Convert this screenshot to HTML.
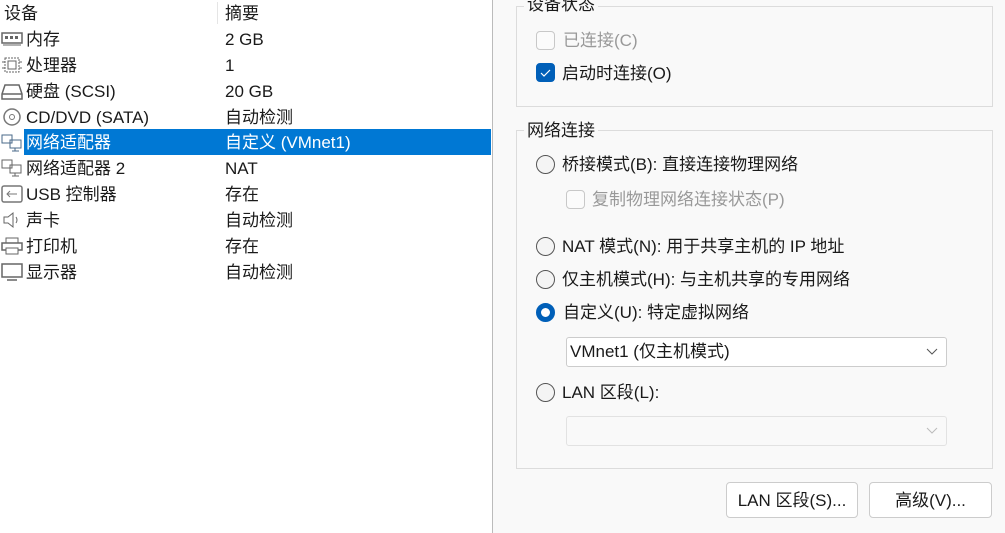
<!DOCTYPE html><html><head><meta charset="utf-8"><style>
*{margin:0;padding:0;box-sizing:border-box}
body{width:1005px;height:533px;overflow:hidden;background:#f9f9f9;font-family:"Liberation Sans","Noto Sans CJK SC",sans-serif;font-size:17px;color:#1a1a1a;position:relative}
.l{position:absolute;left:0;top:0;width:493px;height:533px;background:#fff;border-right:1px solid #bbb}
.r{position:absolute;height:26px;line-height:28px;left:0;width:491px}
.r .a{position:absolute;left:26px}.r .b{position:absolute;left:225px}
.sel{background:#0078d4;color:#fff;left:24px;width:467px}
.sel .a{left:2px}.sel .b{left:201px}
.ic{position:absolute;left:1px;top:4px;width:22px;height:18px}
.g{position:absolute;border:1px solid #dcdcdc;left:516px;width:477px}
.gt{position:absolute;background:#f9f9f9;padding:0 3px;left:7px;top:-13px;line-height:22px}
.t{position:absolute;line-height:24px;white-space:nowrap}
.cb{position:absolute;width:19px;height:19px;border:1px solid #c8c8c8;border-radius:4px;background:#fbfbfb}
.rd{position:absolute;width:19px;height:19px;border:1px solid #555;border-radius:50%;background:#f4f4f4}
.dd{position:absolute;left:566px;width:381px;height:30px;border:1px solid #ccc;border-radius:3px;background:#fff}
.btn{position:absolute;top:482px;height:36px;border:1px solid #ccc;border-radius:4px;background:#fff;text-align:center;line-height:36px}
.gray{color:#999}
</style></head><body>
<div class="l">
<div class="r" style="top:0"><span style="position:absolute;left:4px">设备</span><span style="position:absolute;left:217px;top:2px;height:22px;border-left:1px solid #e5e5e5"></span><span class="b">摘要</span></div>
<div class="r" style="top:26px"><svg class="ic" viewBox="0 0 22 18"><rect x="1" y="3" width="20" height="10" fill="none" stroke="#666" stroke-width="1.5"/><rect x="4" y="6" width="3" height="3" fill="#666"/><rect x="9" y="6" width="3" height="3" fill="#666"/><rect x="14" y="6" width="3" height="3" fill="#666"/><path d="M2 15h18" stroke="#666"/></svg><span class="a">内存</span><span class="b">2 GB</span></div>
<div class="r" style="top:52px"><svg class="ic" viewBox="0 0 22 18"><rect x="4" y="2" width="14" height="14" fill="none" stroke="#666" stroke-dasharray="2 1"/><rect x="7" y="5" width="8" height="8" fill="none" stroke="#666"/><path d="M1 6h3M1 12h3M18 6h3M18 12h3" stroke="#666"/></svg><span class="a">处理器</span><span class="b">1</span></div>
<div class="r" style="top:78px"><svg class="ic" viewBox="0 0 22 18"><path d="M4 3h14l3 9v5H1v-5z M1 12h20" fill="none" stroke="#666" stroke-width="1.5"/></svg><span class="a">硬盘 (SCSI)</span><span class="b">20 GB</span></div>
<div class="r" style="top:104px"><svg class="ic" viewBox="0 0 22 18"><circle cx="11" cy="9" r="8" fill="none" stroke="#777" stroke-width="1.5"/><circle cx="11" cy="9" r="2.5" fill="none" stroke="#777"/></svg><span class="a">CD/DVD (SATA)</span><span class="b">自动检测</span></div>
<div class="r" style="top:130px;left:0;width:24px"><svg class="ic" viewBox="0 0 22 18"><rect x="1" y="1" width="10" height="8" fill="none" stroke="#4a6a8a"/><rect x="9" y="6" width="11" height="8" fill="none" stroke="#4a6a8a"/><path d="M14 14v3M11 17h7" stroke="#4a6a8a"/></svg></div>
<div class="r sel" style="top:129px"><span class="a">网络适配器</span><span class="b">自定义 (VMnet1)</span></div>
<div class="r" style="top:155px"><svg class="ic" viewBox="0 0 22 18"><rect x="1" y="1" width="10" height="8" fill="none" stroke="#666"/><rect x="9" y="6" width="11" height="8" fill="none" stroke="#666"/><path d="M14 14v3M11 17h7" stroke="#666"/></svg><span class="a">网络适配器 2</span><span class="b">NAT</span></div>
<div class="r" style="top:181px"><svg class="ic" viewBox="0 0 22 18"><rect x="1" y="1" width="20" height="16" rx="2" fill="none" stroke="#777" stroke-width="1.5"/><path d="M6 9h10M9 6l-3 3 3 3" fill="none" stroke="#777"/></svg><span class="a">USB 控制器</span><span class="b">存在</span></div>
<div class="r" style="top:207px"><svg class="ic" viewBox="0 0 22 18"><path d="M3 6h4l5-4v14l-5-4H3z" fill="none" stroke="#666"/><path d="M15 6q2 3 0 6" fill="none" stroke="#666"/></svg><span class="a">声卡</span><span class="b">自动检测</span></div>
<div class="r" style="top:233px"><svg class="ic" viewBox="0 0 22 18"><rect x="5" y="1" width="12" height="5" fill="none" stroke="#666"/><rect x="1" y="6" width="20" height="7" fill="none" stroke="#666" stroke-width="1.5"/><rect x="5" y="11" width="12" height="6" fill="#fff" stroke="#666"/></svg><span class="a">打印机</span><span class="b">存在</span></div>
<div class="r" style="top:259px"><svg class="ic" viewBox="0 0 22 18"><rect x="1" y="1" width="20" height="13" fill="none" stroke="#666" stroke-width="1.5"/><path d="M6 17h10" stroke="#666" stroke-width="1.5"/></svg><span class="a">显示器</span><span class="b">自动检测</span></div>
</div>
<div class="g" style="top:6px;height:101px"><span class="gt">设备状态</span></div>
<div class="cb" style="left:536px;top:31px"></div><span class="t gray" style="left:563px;top:29px">已连接(C)</span>
<div class="cb" style="left:536px;top:63px;background:#005fb8;border-color:#005fb8"><svg width="17" height="17" viewBox="0 0 17 17"><path d="M4 9l3 3 6-6" fill="none" stroke="#fff" stroke-width="1.2"/></svg></div><span class="t" style="left:562px;top:62px">启动时连接(O)</span>
<div class="g" style="top:130px;height:339px"><span class="gt" style="top:-11px">网络连接</span></div>
<div class="rd" style="left:536px;top:155px"></div><span class="t" style="left:562px;top:153px">桥接模式(B): 直接连接物理网络</span>
<div class="cb" style="left:566px;top:190px"></div><span class="t gray" style="left:592px;top:188px">复制物理网络连接状态(P)</span>
<div class="rd" style="left:536px;top:237px"></div><span class="t" style="left:562px;top:235px">NAT 模式(N): 用于共享主机的 IP 地址</span>
<div class="rd" style="left:536px;top:270px"></div><span class="t" style="left:562px;top:268px">仅主机模式(H): 与主机共享的专用网络</span>
<div class="rd" style="left:536px;top:303px;border:5px solid #005fb8;background:#fff"></div><span class="t" style="left:563px;top:301px">自定义(U): 特定虚拟网络</span>
<div class="dd" style="top:337px"><span class="t" style="left:3px;top:2px">VMnet1 (仅主机模式)</span><svg style="position:absolute;right:8px;top:10px" width="12" height="8"><path d="M1 1l5 5 5-5" fill="none" stroke="#555"/></svg></div>
<div class="rd" style="left:536px;top:383px"></div><span class="t" style="left:562px;top:381px">LAN 区段(L):</span>
<div class="dd" style="top:416px;border-color:#e2e2e2;background:#f9f9f9"><svg style="position:absolute;right:8px;top:10px" width="12" height="8"><path d="M1 1l5 5 5-5" fill="none" stroke="#bbb"/></svg></div>
<div class="btn" style="left:726px;width:132px">LAN 区段(S)...</div>
<div class="btn" style="left:869px;width:123px">高级(V)...</div>
</body></html>
